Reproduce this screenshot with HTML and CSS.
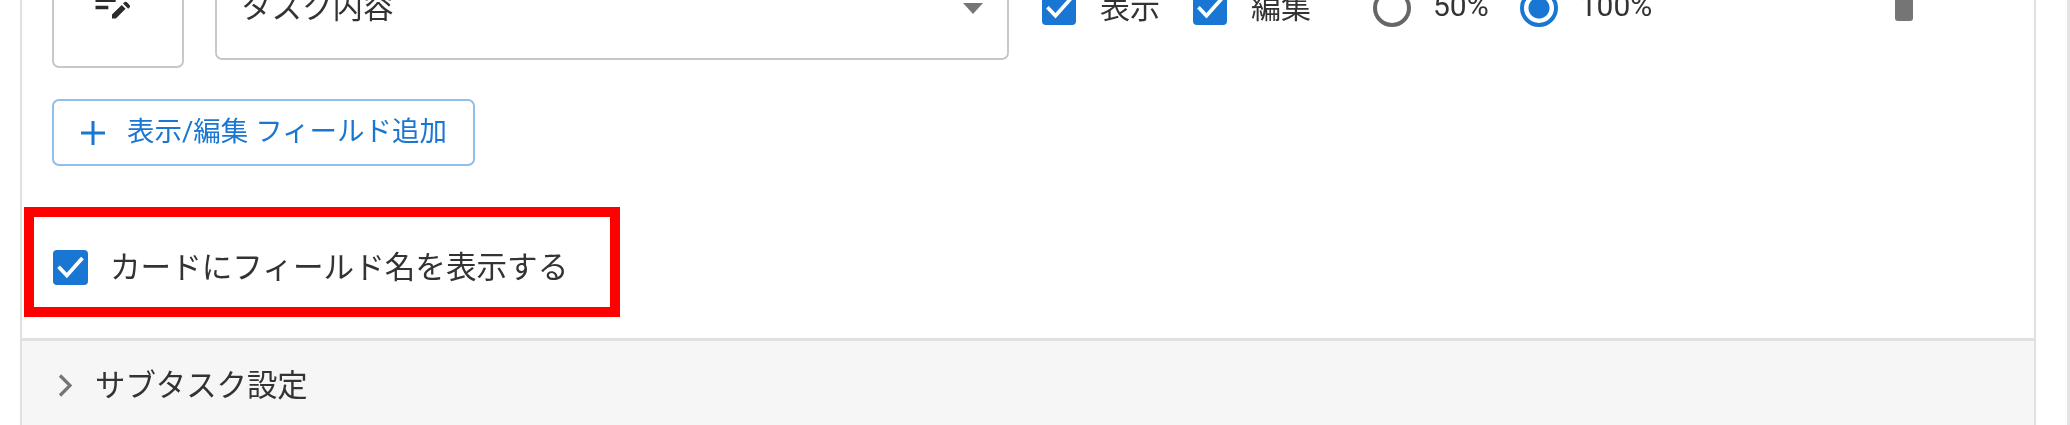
FILE: index.html
```html
<!DOCTYPE html>
<html lang="ja">
<head>
    <meta charset="UTF-8">
    <title>カード設定</title>
    <link rel="stylesheet" href="styles.css">
</head>
<body>
    <div class="panel">
        <div class="field-row">
            <button class="icon-btn">
                <svg viewBox="0 0 24 24" width="44" height="44"><path d="M3 10h11v2H3zM3 6h11v2H3zM3 14h7v2H3zM18.01 12.87l.71-.71c.39-.39 1.02-.39 1.41 0l1.41 1.41c.39.39.39 1.02 0 1.41l-.71.71zM17.3 13.58l-5.3 5.3V21h2.12l5.3-5.3z"/></svg>
            </button>
            <div class="select">
                <span class="txt">タスク内容</span>
                <span class="select-arrow"></span>
            </div>
            <div class="options">
                <label class="check-label first"><span class="check"><svg viewBox="0 0 24 24"><path d="M3.8 11.5l5.7 6L20.2 5.5" /></svg></span><span class="txt">表示</span></label>
                <label class="check-label"><span class="check"><svg viewBox="0 0 24 24"><path d="M3.8 11.5l5.7 6L20.2 5.5" /></svg></span><span class="txt">編集</span></label>
                <label class="radio-label first-radio"><span class="radio"></span><span class="txt">50%</span></label>
                <label class="radio-label"><span class="radio on"></span><span class="txt">100%</span></label>
            </div>
            <div class="trash"></div>
        </div>

        <button class="add-btn">
            <svg viewBox="0 0 24 24" width="24" height="24"><path d="M10.5 0h3v10.5H24v3H13.5V24h-3V13.5H0v-3h10.5z"/></svg>
            <span class="add-text">表示/編集 フィールド追加</span>
        </button>

        <div class="highlight">
            <label class="check-label big"><span class="check"><svg viewBox="0 0 24 24"><path d="M3.8 11.5l5.7 6L20.2 5.5" /></svg></span><span class="txt">カードにフィールド名を表示する</span></label>
        </div>

        <div class="accordion">
            <svg class="chevron" viewBox="0 0 14 23" width="14" height="23"><path d="M2 1.5l10 10-10 10"/></svg>
            <span class="txt">サブタスク設定</span>
        </div>
    </div>
</body>
</html>
```

FILE: styles.css
```css
html, body {
    margin: 0;
    height: 425px;
    overflow: hidden;
    background: #fff;
}

body {
    box-sizing: border-box;
    font-family: Roboto, "Noto Sans CJK JP", sans-serif;
    font-size: 30px;
    color: #333;
    border-right: 3px solid #e4e4e4;
}

.txt {
    margin-top: -5px;
}

.panel {
    box-sizing: border-box;
    width: 2016px;
    height: 470px;
    margin: -45px 0 0 20px;
    border-left: 2px solid #e0e0e0;
    border-right: 2px solid #e0e0e0;
}

.field-row {
    display: flex;
    align-items: flex-start;
    height: 144px;
    padding-left: 30px;
    filter: blur(0.5px);
}

.icon-btn {
    box-sizing: border-box;
    width: 132px;
    height: 113px;
    display: flex;
    align-items: flex-start;
    justify-content: center;
    background: #fff;
    border: 2px solid #c8c8c8;
    border-radius: 7px;
    padding: 23px 13px 0 0;
    fill: #2b2b2b;
}

.select {
    box-sizing: border-box;
    width: 794px;
    height: 105px;
    margin-left: 31px;
    padding: 0 24px;
    display: flex;
    align-items: center;
    justify-content: space-between;
    border: 2px solid #c8c8c8;
    border-radius: 7px;
    font-size: 30.5px;
}

.select-arrow {
    width: 0;
    height: 0;
    margin-top: 2px;
    border-left: 10px solid transparent;
    border-right: 10px solid transparent;
    border-top: 11px solid #757575;
}

.options {
    display: flex;
    align-items: center;
    height: 105px;
    padding-left: 33px;
}

.check-label {
    display: flex;
    align-items: center;
}

.check-label.first {
    margin-right: 33px;
}

.check {
    width: 34px;
    height: 34px;
    margin-right: 24px;
    background: #1976d2;
    border-radius: 4px;
    flex: none;
}

.check svg {
    display: block;
    fill: none;
    stroke: #fff;
    stroke-width: 2.6;
}

.radio-label {
    display: flex;
    align-items: center;
    margin-left: 31px;
}

.first-radio {
    margin-left: 62px;
}

.radio {
    box-sizing: border-box;
    width: 38px;
    height: 38px;
    margin-right: 22px;
    border: 4px solid #666;
    border-radius: 50%;
}

.radio.on {
    border-color: #1976d2;
    background: radial-gradient(circle, #1976d2 0 10px, #fff 11px);
}

.trash {
    width: 18px;
    height: 66px;
    margin-left: auto;
    margin-right: 121px;
    background: #757575;
    border-radius: 0 0 3px 3px;
}

.add-btn {
    box-sizing: border-box;
    width: 423px;
    height: 67px;
    margin-left: 30px;
    padding: 0 0 0 27px;
    display: flex;
    align-items: center;
    gap: 22px;
    background: #fff;
    border: 2px solid #90bfeb;
    border-radius: 7px;
    color: #1976d2;
    fill: #1976d2;
    font-family: inherit;
    font-size: 27.5px;
    filter: blur(0.5px);
}

.add-text {
    margin-top: -8px;
}

.highlight {
    box-sizing: border-box;
    display: flex;
    align-items: center;
    width: 596px;
    height: 110px;
    margin: 41px 0 0 2px;
    padding: 10px 0 0 19px;
    border: 10px solid #f00;
}

.big {
    font-size: 30.6px;
    filter: blur(0.5px);
}

.big .check {
    width: 35px;
    height: 35px;
    margin-right: 22px;
}

.accordion {
    box-sizing: border-box;
    display: flex;
    align-items: center;
    height: 87px;
    margin-top: 21px;
    padding: 4px 0 0 36px;
    gap: 23px;
    background: #f6f6f6;
    border-top: 3px solid #e0e0e0;
    font-size: 30.4px;
    filter: blur(0.5px);
}

.chevron {
    fill: none;
    stroke: #757575;
    stroke-width: 3.2;
}
```
